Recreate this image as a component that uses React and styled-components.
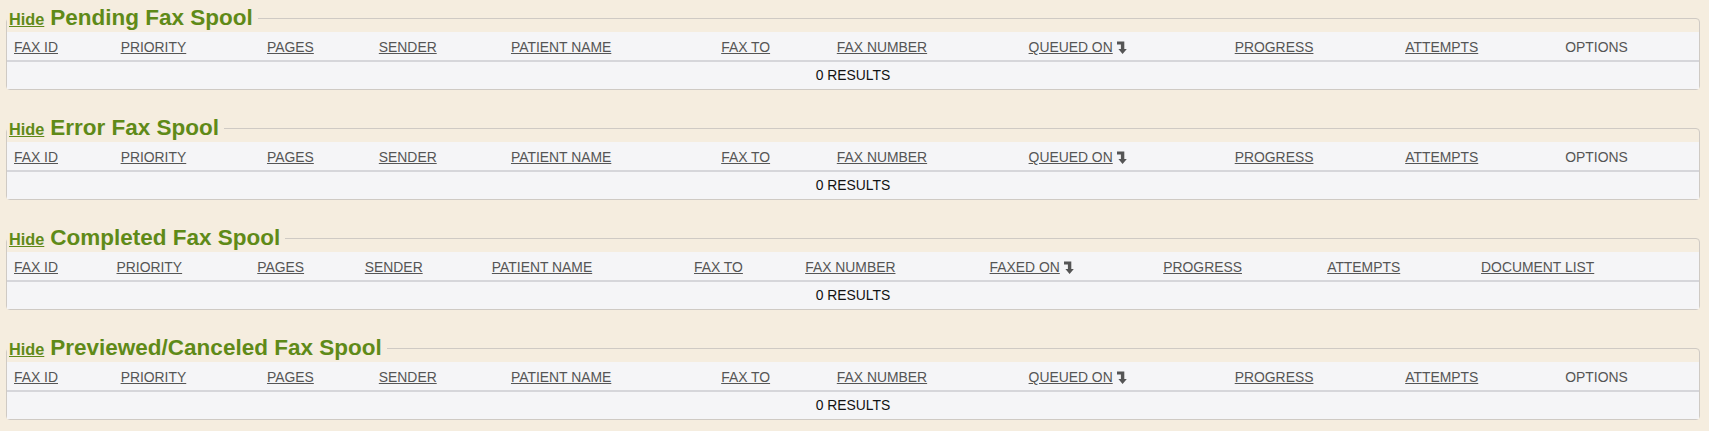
import styled, { createGlobalStyle } from 'styled-components';

const GlobalStyle = createGlobalStyle`
	html, body {
		margin: 0;
		padding: 0;
		background: #f5eddf;
		font-family: "Liberation Sans", Arial, sans-serif;
	}
`;

const baseCols = [
	'FAX ID',
	'PRIORITY',
	'PAGES',
	'SENDER',
	'PATIENT NAME',
	'FAX TO',
	'FAX NUMBER',
	'QUEUED ON',
	'PROGRESS',
	'ATTEMPTS',
];

const spools = [
	{ title: 'Pending Fax Spool', cols: baseCols, sorted: 'QUEUED ON', last: 'OPTIONS', lastLink: false },
	{ title: 'Error Fax Spool', cols: baseCols, sorted: 'QUEUED ON', last: 'OPTIONS', lastLink: false },
	{
		title: 'Completed Fax Spool',
		cols: baseCols.map((c) => (c === 'QUEUED ON' ? 'FAXED ON' : c)),
		sorted: 'FAXED ON',
		last: 'DOCUMENT LIST',
		lastLink: true,
	},
	{ title: 'Previewed/Canceled Fax Spool', cols: baseCols, sorted: 'QUEUED ON', last: 'OPTIONS', lastLink: false },
];

const SortArrow = () => (
	<ArrowSvg width="10" height="13" viewBox="0 0 10 13">
		<path d="M0 0.5 H7.3 V8 H9.8 L5.6 12.9 L1.4 8 H3.9 V3.4 H0 Z" fill="#555" />
	</ArrowSvg>
);

const Spool = ({ spool }) => (
	<Fieldset>
		<Legend>
			<HideLink href="#">Hide</HideLink>
			<Title>{spool.title}</Title>
		</Legend>
		<Table>
			<thead>
				<tr>
					{spool.cols.map((c) => (
						<Th key={c}>
							<SortLink href="#">{c}</SortLink>
							{c === spool.sorted && <SortArrow />}
						</Th>
					))}
					<Th>{spool.lastLink ? <SortLink href="#">{spool.last}</SortLink> : spool.last}</Th>
				</tr>
			</thead>
			<tbody>
				<tr>
					<Td colSpan={spool.cols.length + 1}>0 RESULTS</Td>
				</tr>
			</tbody>
		</Table>
	</Fieldset>
);

export default function App() {
	return (
		<>
			<GlobalStyle />
			<Page>
				{spools.map((s) => (
					<Spool key={s.title} spool={s} />
				))}
			</Page>
		</>
	);
}

const Page = styled.div`
	padding: 5px 9px 0 6px;
	display: flex;
	flex-direction: column;
	gap: 25px;
`;

const Fieldset = styled.fieldset`
	margin: 0;
	padding: 0;
	border: 1px solid #cfcac4;
	border-radius: 4px;
	min-width: 0;
`;

const Legend = styled.legend`
	padding: 0 5px 0 2px;
	margin: 0;
	line-height: 25px;
	white-space: nowrap;
`;

const HideLink = styled.a`
	color: #5f8a18;
	font-size: 16.3px;
	font-weight: bold;
	text-decoration: underline;
`;

const Title = styled.span`
	color: #5f8a18;
	font-size: 22.5px;
	font-weight: bold;
	margin-left: 6px;
`;

const Table = styled.table`
	width: 100%;
	border-collapse: collapse;
	background: #f5f5f7;
	font-size: 13.9px;
`;

const Th = styled.th`
	text-align: left;
	font-weight: normal;
	color: #555;
	padding: 7px 7px 5px;
	line-height: 16px;
	white-space: nowrap;
	border-bottom: 2px solid #d6d6da;
`;

const SortLink = styled.a`
	color: #555;
	text-decoration: underline;
`;

const ArrowSvg = styled.svg`
	margin-left: 4px;
	vertical-align: -2px;
`;

const Td = styled.td`
	text-align: center;
	color: #111;
	padding: 6px 7px;
	line-height: 15px;
`;
